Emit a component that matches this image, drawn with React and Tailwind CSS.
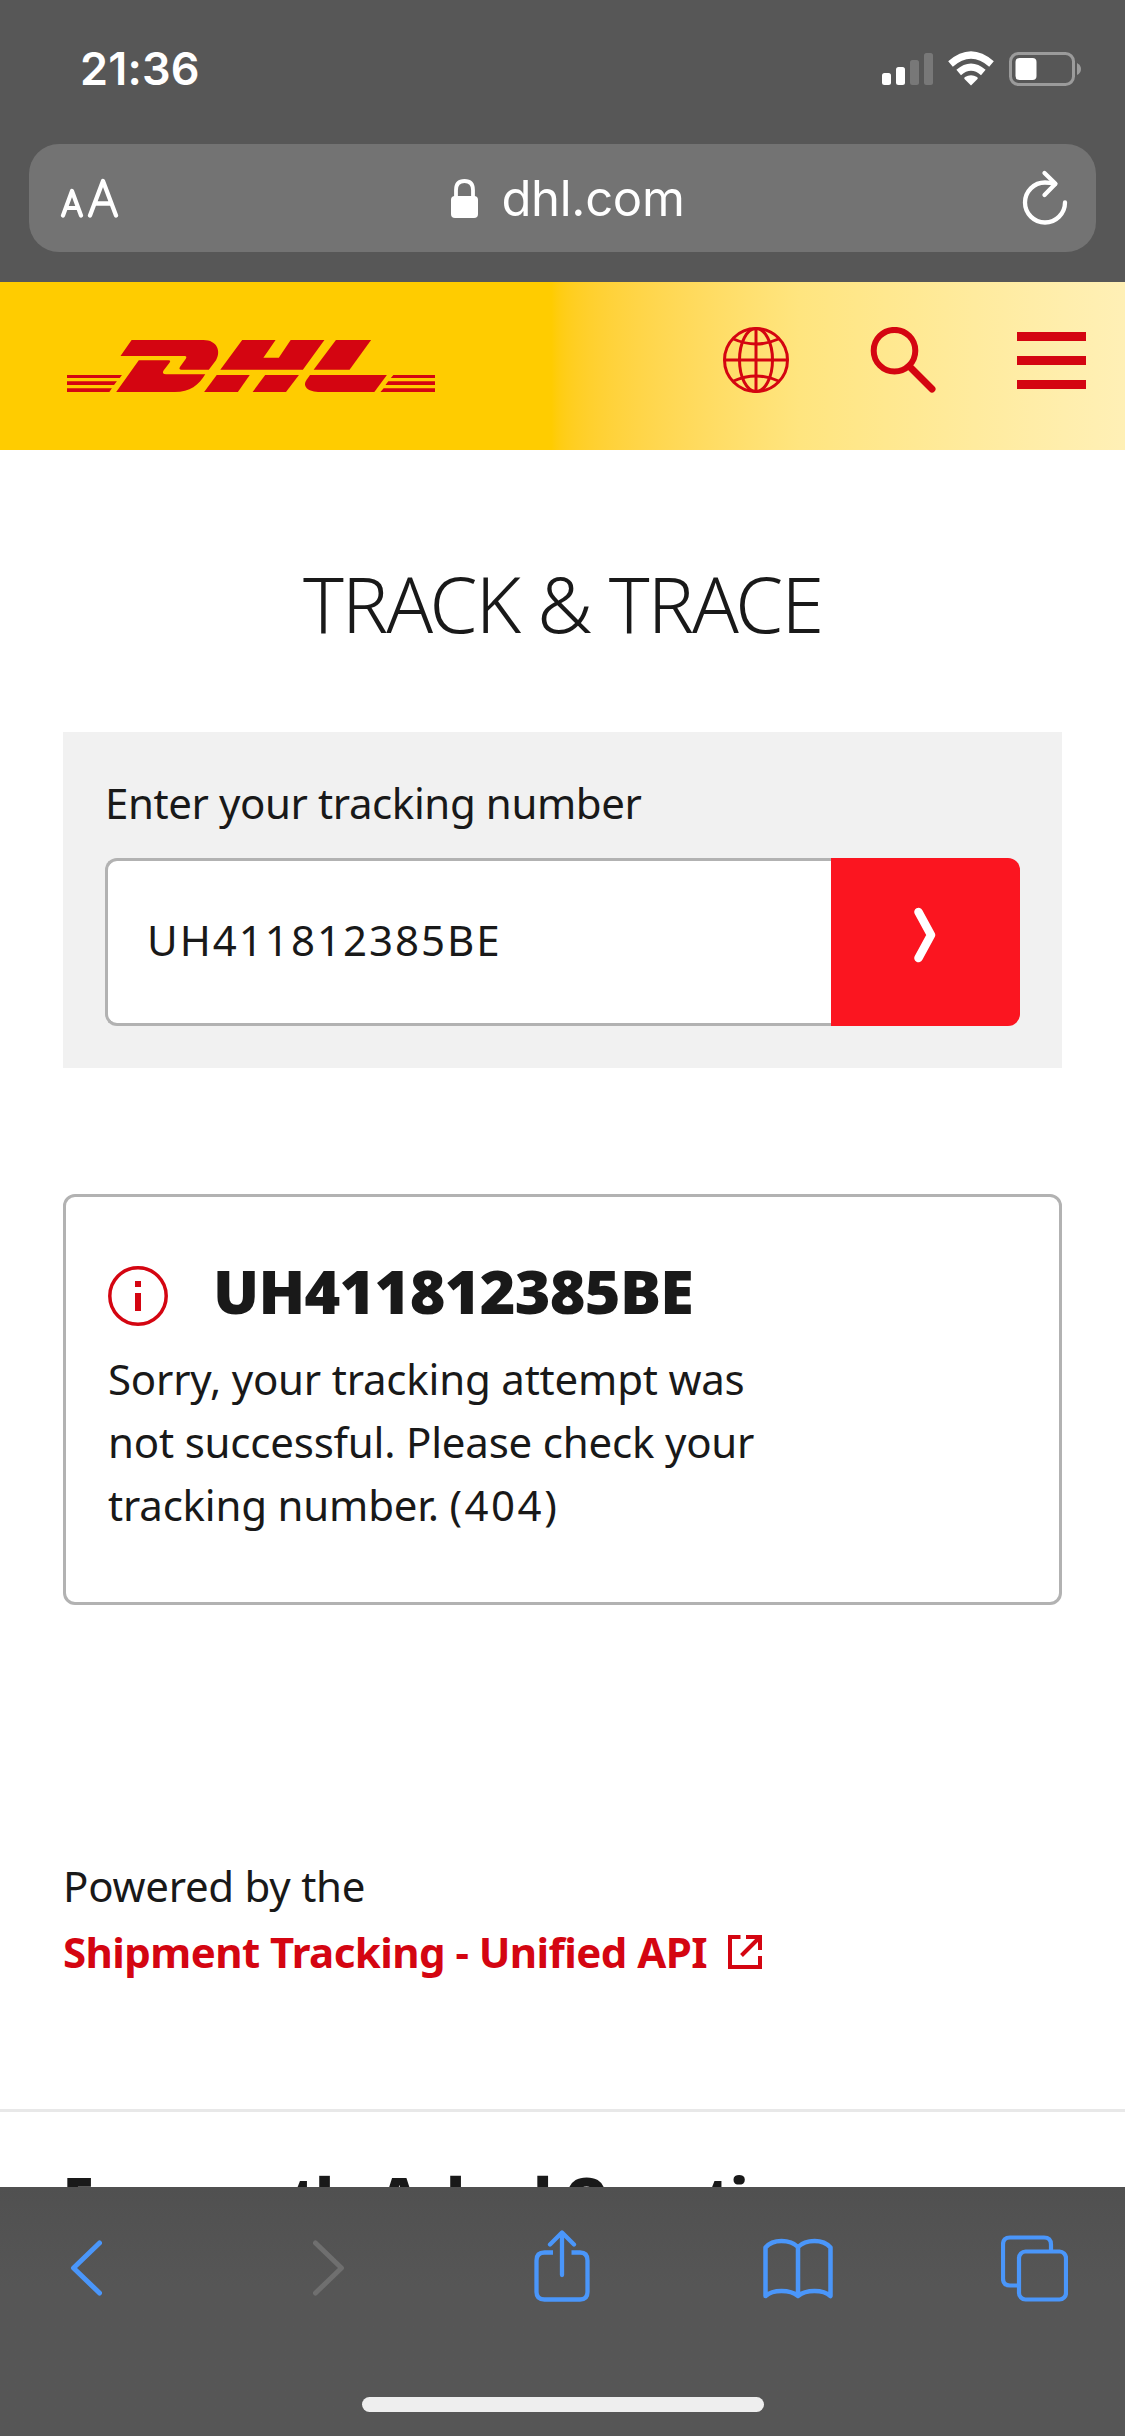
import React, { useState } from "react";

const StatusBar = () => (
  <div className="flex h-[144px] items-start justify-between pt-[49px] pl-[80px] pr-[44px]">
    <span className="text-[45px] leading-[40px] font-semibold tracking-[0.2px]">
      21:36
    </span>
    <svg className="mt-[2px]" width="202" height="36" viewBox="0 0 202 36">
      <g fill="#fff">
        <rect x="3" y="22" width="9" height="12" rx="2.5" />
        <rect x="17" y="16" width="9" height="18" rx="2.5" />
        <rect x="31" y="9" width="9" height="25" rx="2.5" fillOpacity="0.2" />
        <rect x="45" y="2" width="9" height="32" rx="2.5" fillOpacity="0.2" />
        <path d="M92 34.500L85.500 28Q84.600 27 86 26Q92 22.300 98 26Q99.400 27 98.500 28Z" />
      </g>
      <g fill="none" stroke="#fff" strokeWidth="7">
        <path d="M71.500 13Q92 -5 112.500 13" />
        <path d="M79.700 21.500Q92 10.700 104.300 21.500" />
      </g>
      <rect
        x="131.5"
        y="2.5"
        width="63"
        height="31"
        rx="8"
        fill="none"
        stroke="#9b9b9b"
        strokeWidth="3"
      />
      <rect x="136.500" y="7" width="21" height="22" rx="4" fill="#fff" />
      <path d="M198 12Q202 14 202 18Q202 22 198 24Z" fill="#9b9b9b" />
    </svg>
  </div>
);

const AddressBar = () => (
  <div className="mx-[29px] flex h-[108px] items-center justify-between rounded-[30px] bg-[#737373] pr-[27px] pl-[30px]">
    <svg
      width="60"
      height="40"
      viewBox="0 0 60 40"
      fill="none"
      stroke="#fff"
      strokeWidth="4.300"
      strokeLinecap="round"
      strokeLinejoin="round"
    >
      <path d="M4 37.500L13 13L22 37.500M7 30H19" strokeWidth="4.200" />
      <path d="M31 37.500L44 3L57 37.500M35.500 25.500H52.500" />
    </svg>
    <div className="flex items-center pr-[4px]">
      <svg className="mt-px" width="27" height="40" viewBox="0 0 27 40">
        <path
          d="M5 18V11Q5 2 13.500 2Q22 2 22 11V18"
          fill="none"
          stroke="#fff"
          strokeWidth="3.800"
        />
        <rect y="17" width="27" height="22" rx="4" fill="#fff" />
      </svg>
      <span className="mt-px ml-[23px] text-[49px] leading-[60px] tracking-[-0.3px]">
        dhl.com
      </span>
    </div>
    <svg
      width="48"
      height="58"
      viewBox="0 0 48 58"
      fill="none"
      stroke="#fff"
      strokeWidth="4.300"
      strokeLinecap="round"
      strokeLinejoin="round"
    >
      <path d="M44 33.500A20 20 0 1 1 24 13.500Q29 13.500 34 15" />
      <path d="M23.500 4L34.500 14.800L23.500 26" />
    </svg>
  </div>
);

const DhlLogo = () => (
  <svg
    width="368"
    height="52"
    viewBox="188 180 1025 155"
    preserveAspectRatio="none"
    fill="#d40511"
  >
    <path d="M368 180H568C606 180 618 214 603 240L583 269H507Q498 269 503 260L519 236Q523 228 516 228H337Z" />
    <path d="M388 240H471Q478 240 474 247L457 271Q451 282 464 282H573C556 314 530 335 488 335H325Z" />
    <path d="M676 180H769L735 233H778L811 180H905L845 269H615Z" />
    <path d="M605 284H697L664 335H570Z" />
    <path d="M740 284H834L798 335H705Z" />
    <path d="M937 180H1035L975 269H875Z" />
    <path d="M865 284H1079L1044 335H894C858 335 843 318 855 299Z" />
    <path d="M188 284H341L335 293H188ZM188 303H327L319 314H188ZM188 324H313L306 335H188Z" />
    <path d="M1097 284H1213V293H1090ZM1083 303H1213V314H1075ZM1070 324H1213V335H1061Z" />
  </svg>
);

const Header = () => (
  <header className="flex h-[168px] shrink-0 items-start bg-linear-to-r from-[#ffcc00] from-49% via-[#ffe57f] via-71% to-[#fff0b6] pt-[45px] pr-[39px] pl-[67px]">
    <div className="mt-[13px] flex-1">
      <DhlLogo />
    </div>
    <svg
      width="66"
      height="66"
      viewBox="0 0 66 66"
      fill="none"
      stroke="#d40511"
      strokeWidth="3"
    >
      <circle cx="33" cy="33" r="31.5" />
      <ellipse cx="33" cy="33" rx="16.5" ry="31.5" />
      <path d="M33 1V65M1 33H65" />
      <path d="M10.500 12Q33 22 55.500 12M10.500 54Q33 44 55.500 54" />
    </svg>
    <svg
      className="ml-[80px]"
      width="68"
      height="68"
      viewBox="0 0 68 68"
      fill="none"
      stroke="#d40511"
      strokeLinecap="round"
    >
      <circle cx="25.5" cy="23.7" r="20.8" strokeWidth="6" />
      <path d="M40.500 39.500L63 62" strokeWidth="7" />
    </svg>
    <div className="mt-[5px] ml-[80px] flex w-[69px] flex-col gap-[15px]">
      <span className="h-[9px] bg-[#d40511]" />
      <span className="h-[9px] bg-[#d40511]" />
      <span className="h-[9px] bg-[#d40511]" />
    </div>
  </header>
);

const TrackingForm = () => {
  const [number, setNumber] = useState("UH411812385BE");

  return (
    <form className="mt-[80px] h-[336px] bg-[#f1f1f1] px-[42px] pt-[41px]">
      <label className="block text-[42px] leading-[60px] tracking-[-0.4px]">
        Enter your tracking number
      </label>
      <div className="mt-[25px] flex h-[168px]">
        <input
          className="w-[726px] rounded-l-xl border-[3px] border-r-0 border-[#b2b2b2] bg-white pb-[5px] pl-[39px] text-[42px] tracking-[2px] outline-none"
          value={number}
          onChange={(e) => setNumber(e.target.value)}
        />
        <button
          type="button"
          className="flex flex-1 items-start justify-center rounded-r-xl bg-[#fb1520] pt-[49px] pr-[2px]"
        >
          <svg
            width="22"
            height="56"
            viewBox="0 0 22 56"
            fill="none"
            stroke="#fff"
            strokeWidth="8.5"
            strokeLinecap="round"
            strokeLinejoin="round"
          >
            <path d="M4.500 5L17 28L4.500 51" />
          </svg>
        </button>
      </div>
    </form>
  );
};

const ResultCard = () => (
  <section className="mt-[126px] h-[411px] rounded-xl border-[3px] border-[#b2b2b2] px-[42px] pt-[64px]">
    <div className="flex items-start">
      <svg className="mt-[5px]" width="60" height="60" viewBox="0 0 60 60">
        <circle
          cx="30"
          cy="30"
          r="28.2"
          fill="none"
          stroke="#d40511"
          strokeWidth="3.5"
        />
        <path d="M27 15H33V21H27ZM27 27H33V45H27Z" fill="#d40511" />
      </svg>
      <h2 className="ml-[45px] text-[61px] leading-[60px] font-black tracking-[-0.7px]">
        UH411812385BE
      </h2>
    </div>
    <p className="mt-[21px] text-[42px] leading-[63px] tracking-[-0.2px]">
      Sorry, your tracking attempt was
      <br />
      not successful. Please check your
      <br />
      tracking number. <span className="tracking-[2.5px]">(404)</span>
    </p>
  </section>
);

const PoweredBy = () => (
  <div className="mt-[248px] text-[42px] leading-[66px] tracking-[-0.25px]">
    <p>Powered by the</p>
    <a className="flex items-center font-bold tracking-[-0.55px] text-[#d40511]">
      Shipment Tracking - Unified API
      <svg
        className="mb-px ml-[21px]"
        width="34"
        height="34"
        viewBox="0 0 34 34"
        fill="none"
        stroke="#d40511"
        strokeWidth="4"
      >
        <path d="M12.500 2H2V32H32V21" />
        <path d="M18 2H32V15M32 2L13.500 20.500" />
      </svg>
    </a>
  </div>
);

const BottomBar = () => (
  <footer className="h-[249px] shrink-0 bg-linear-to-b from-[#505050] to-[#565656] to-40% pt-[43px]">
    <div className="flex h-[72px] items-start pl-[70px]">
      <svg
        className="mt-[8px]"
        width="32"
        height="58"
        viewBox="0 0 32 58"
        fill="none"
        stroke="#4a96fa"
        strokeWidth="5"
        strokeLinecap="round"
        strokeLinejoin="round"
      >
        <path d="M29.500 5L3.500 30L29.500 55" />
      </svg>
      <svg
        className="mt-[8px] ml-[211px]"
        width="32"
        height="58"
        viewBox="0 0 32 58"
        fill="none"
        stroke="#6f6f6f"
        strokeWidth="5"
        strokeLinecap="round"
        strokeLinejoin="round"
      >
        <path d="M2.500 5L28.500 30L2.500 55" />
      </svg>
      <svg
        className="ml-[189px]"
        width="56"
        height="72"
        viewBox="0 0 56 72"
        fill="none"
        stroke="#4a96fa"
        strokeWidth="4.3"
        strokeLinejoin="round"
      >
        <path d="M19 22.500H10.500Q2.500 22.500 2.500 30.500V62Q2.500 69.500 10.500 69.500H46Q53.500 69.500 53.500 62V30.500Q53.500 22.500 46 22.500H37.500" />
        <path d="M28 45V3M16 14.500L28 2.500L40 14.500" strokeLinecap="round" />
      </svg>
      <svg
        className="mt-[8px] ml-[173px]"
        width="70"
        height="62"
        viewBox="0 0 70 62"
        fill="none"
        stroke="#4a96fa"
        strokeWidth="4.5"
        strokeLinecap="round"
        strokeLinejoin="round"
      >
        <path d="M35 58V9Q29 3 18.500 3Q8 3 2.500 9.500V58Q8 53 18.500 53Q29 53 35 58Q41 53 51.500 53Q62 53 67.500 58V9.500Q62 3 51.500 3Q41 3 35 9" />
      </svg>
      <svg
        className="mt-[5px] ml-[168px]"
        width="67"
        height="67"
        viewBox="0 0 67 67"
        fill="none"
        stroke="#4a96fa"
        strokeWidth="4.2"
      >
        <rect x="18" y="16.5" width="47" height="48" rx="6.5" />
        <path d="M50 16.500V9.500Q50 2.500 43 2.500H9Q2 2.500 2 9.500V43.500Q2 50.500 9 50.500H18" />
      </svg>
    </div>
    <div className="mx-auto mt-[95px] h-[15px] w-[402px] rounded-full bg-[#eeeeee]" />
  </footer>
);

export default function App() {
  return (
    <div className="flex h-[2436px] w-[1125px] flex-col overflow-hidden bg-white font-['Noto_Sans',sans-serif] text-[#191919]">
      <div className="h-[282px] shrink-0 bg-[#575757] font-['Inter',sans-serif] text-white">
        <StatusBar />
        <AddressBar />
      </div>
      <Header />
      <main className="min-h-0 flex-1 overflow-hidden">
        <div className="px-[63px] pt-[106px]">
          <h1 className="text-center text-[77px] leading-[96px] font-[350] tracking-[-1.9px]">
            TRACK &amp; TRACE
          </h1>
          <TrackingForm />
          <ResultCard />
          <PoweredBy />
        </div>
        <div className="mt-[124px] border-t-[3px] border-[#e8e8e8] px-[63px] pt-[55px]">
          <h2 className="text-[56px] leading-[60px] font-black tracking-[-1.1px] whitespace-nowrap">
            Frequently Asked Questi
          </h2>
        </div>
      </main>
      <BottomBar />
    </div>
  );
}
